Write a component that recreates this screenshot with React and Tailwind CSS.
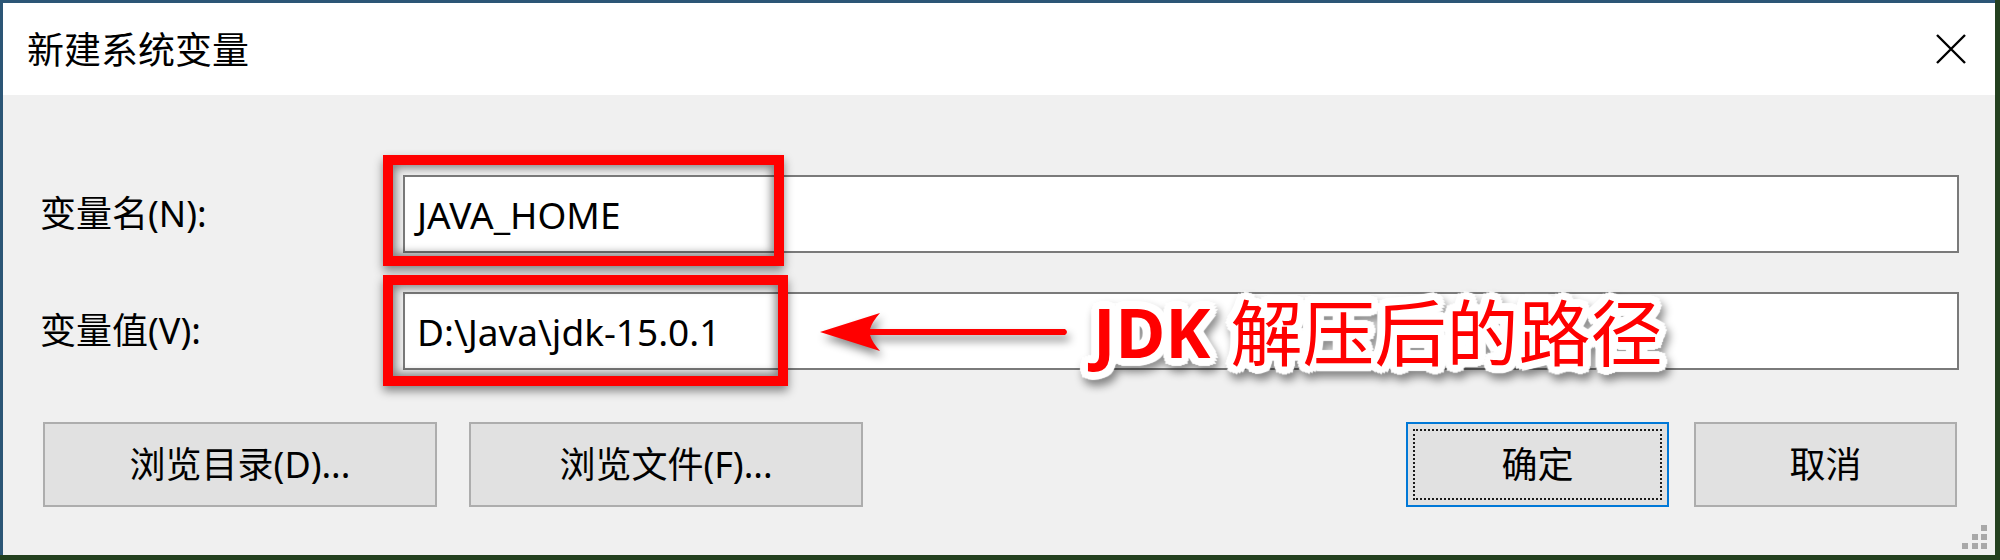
import React from 'react';

const font = 'font-["Noto_Sans","Noto_Sans_CJK_SC",sans-serif]';

function CloseIcon() {
  return (
    <svg width="32" height="32" viewBox="0 0 32 32">
      <path d="M2 2 L30 30 M30 2 L2 30" stroke="#000" strokeWidth="2.4" fill="none" />
    </svg>
  );
}

function Field({ label, value }) {
  return (
    <div className="flex items-center h-[78px] pl-[37px]">
      <div className="w-[363px] text-[36px] leading-none text-black">{label}</div>
      <div className="w-[1556px] h-[78px] bg-white border-2 border-[#7a7a7a] flex items-center pl-[12px]">
        <span className="text-[37px] leading-none text-black">{value}</span>
      </div>
    </div>
  );
}

function Button({ children, width, focused }) {
  return (
    <button
      className={
        focused
          ? 'relative h-[85px] bg-[#e1e1e1] border-2 border-[#0078d7] flex items-center justify-center text-[36px] leading-none text-black'
          : 'relative h-[85px] bg-[#e1e1e1] border-2 border-[#adadad] flex items-center justify-center text-[36px] leading-none text-black'
      }
      style={{ width }}
    >
      {focused && <div className="absolute inset-[5px] border-2 border-dotted border-[#1a1a1a]" />}
      {children}
    </button>
  );
}

function RedBox({ className }) {
  return (
    <div
      className={
        'absolute border-[10px] border-[#ff0000] shadow-[0_5px_9px_rgba(0,0,0,0.45),inset_0_0_9px_3px_rgba(0,0,0,0.45)] ' +
        className
      }
    />
  );
}

function Arrow() {
  return (
    <svg
      className="absolute left-[812px] top-[210px] drop-shadow-[3px_6px_4px_rgba(0,0,0,0.45)]"
      width="260"
      height="57"
      viewBox="0 0 260 57"
    >
      <path d="M5 27 L65 8 Q57 17 55 24 L250 24 Q254 27 250 30 L55 30 Q57 37 65 46 Z" fill="#ff0000" />
    </svg>
  );
}

function Grip() {
  return (
    <svg className="absolute right-[7px] bottom-[5px]" width="26" height="25" viewBox="0 0 26 25">
      <g fill="#a8a8a8">
        <rect x="19" y="0" width="6" height="6" />
        <rect x="10" y="9" width="6" height="6" />
        <rect x="19" y="9" width="6" height="6" />
        <rect x="0" y="18" width="6" height="6" />
        <rect x="10" y="18" width="6" height="6" />
        <rect x="19" y="18" width="6" height="6" />
      </g>
    </svg>
  );
}

export default function App() {
  return (
    <div className={'w-[2000px] h-[560px] bg-[#23401f] overflow-hidden ' + font}>
      <div className="w-[1995px] h-[555px] border-t-[3px] border-l-[3px] border-[#2c5676] flex flex-col">
        {/* 标题栏 */}
        <div className="h-[92px] bg-white flex items-center justify-between pl-[24px] pr-[28px]">
          <span className="text-[37px] leading-none text-black">新建系统变量</span>
          <CloseIcon />
        </div>

        {/* 内容 */}
        <div className="relative flex-1 bg-[#f0f0f0] pt-[80px]">
          <Field label="变量名(N):" value="JAVA_HOME" />
          <div className="mt-[39px]">
            <Field label="变量值(V):" value="D:\Java\jdk-15.0.1" />
          </div>

          <div className="mt-[52px] flex items-center pl-[40px] pr-[38px]">
            <Button width="394px">浏览目录(D)...</Button>
            <div className="ml-[32px]">
              <Button width="394px">浏览文件(F)...</Button>
            </div>
            <div className="ml-auto flex gap-[25px]">
              <Button width="263px" focused>确定</Button>
              <Button width="263px">取消</Button>
            </div>
          </div>

          {/* 标注 */}
          <RedBox className="left-[380px] top-[60px] w-[401px] h-[111px]" />
          <RedBox className="left-[380px] top-[180px] w-[405px] h-[111px]" />
          <Arrow />
          <div className="absolute left-[1090px] top-[192px] h-[90px] flex items-center gap-[20px] text-[#ff0000] leading-none drop-shadow-[3px_6px_4px_rgba(0,0,0,0.45)] [text-shadow:8px_0_1px_#fff,7px_3px_1px_#fff,6px_6px_1px_#fff,3px_7px_1px_#fff,0_8px_1px_#fff,-3px_7px_1px_#fff,-6px_6px_1px_#fff,-7px_3px_1px_#fff,-8px_0_1px_#fff,-7px_-3px_1px_#fff,-6px_-6px_1px_#fff,-3px_-7px_1px_#fff,0_-8px_1px_#fff,3px_-7px_1px_#fff,6px_-6px_1px_#fff,7px_-3px_1px_#fff,4px_0_0_#fff,-4px_0_0_#fff,0_4px_0_#fff,0_-4px_0_#fff]">
            <span className="text-[68px] font-bold">JDK</span>
            <span className="text-[72px]">解压后的路径</span>
          </div>

          <Grip />
        </div>
      </div>
    </div>
  );
}
